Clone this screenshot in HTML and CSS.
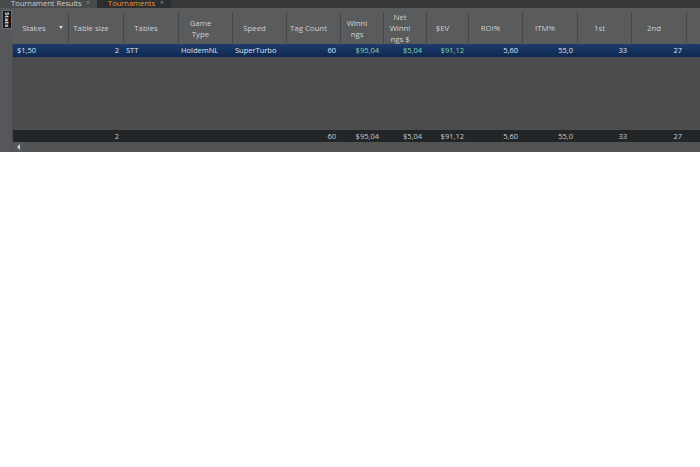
FILE: index.html
```html
<!DOCTYPE html>
<html>
<head>
<meta charset="utf-8">
<link rel="stylesheet" href="styles.css">
</head>
<body>
<div class="app">
  <div class="tabbar">
    <div class="tab active"><span class="tab-label">Tournament Results</span><span class="tab-x">×</span></div>
    <div class="tab other"><span class="tab-label orange">Tournaments</span><span class="tab-x">×</span></div>
  </div>
  <div class="main">
    <div class="side">
      <div class="stats-btn">Stats</div>
    </div>
    <div class="grid-area">
      <div class="row head">
        <div class="hc sort">Stakes<span class="arrow"></span></div>
        <div class="hc">Table size</div>
        <div class="hc">Tables</div>
        <div class="hc">Game<br>Type</div>
        <div class="hc">Speed</div>
        <div class="hc">Tag Count</div>
        <div class="hc">Winni<br>ngs</div>
        <div class="hc">Net<br>Winni<br>ngs $</div>
        <div class="hc">$EV</div>
        <div class="hc">ROI%</div>
        <div class="hc">ITM%</div>
        <div class="hc">1st</div>
        <div class="hc">2nd</div>
        <div class="hc last"></div>
      </div>
      <div class="row data">
        <div class="c l first">$1,50</div>
        <div class="c r">2</div>
        <div class="c l">STT</div>
        <div class="c l">HoldemNL</div>
        <div class="c l">SuperTurbo</div>
        <div class="c r">60</div>
        <div class="c r green">$95,04</div>
        <div class="c r green">$5,04</div>
        <div class="c r green">$91,12</div>
        <div class="c r">5,60</div>
        <div class="c r">55,0</div>
        <div class="c r">33</div>
        <div class="c r">27</div>
        <div class="c"></div>
      </div>
      <div class="filler"></div>
      <div class="row foot">
        <div class="c"></div>
        <div class="c r">2</div>
        <div class="c"></div>
        <div class="c"></div>
        <div class="c"></div>
        <div class="c r">60</div>
        <div class="c r">$95,04</div>
        <div class="c r">$5,04</div>
        <div class="c r">$91,12</div>
        <div class="c r">5,60</div>
        <div class="c r">55,0</div>
        <div class="c r">33</div>
        <div class="c r">27</div>
        <div class="c"></div>
      </div>
      <div class="hscroll">
        <div class="scroll-left"><span class="tri"></span></div>
      </div>
    </div>
  </div>
</div>
</body>
</html>
```

FILE: styles.css
```css
html, body {
  margin: 0;
  padding: 0;
  background: #ffffff;
}
body {
  font-family: "Open Sans", "Noto Sans", sans-serif;
  font-size: 7.5px;
}
.app {
  width: 700px;
  display: flex;
  flex-direction: column;
}
.tabbar {
  height: 8px;
  background: #36383a;
  display: flex;
  overflow: hidden;
}
.tab {
  display: flex;
  align-items: flex-end;
  height: 8px;
  overflow: hidden;
}
.tab.active {
  width: 97px;
  background: #484a4c;
}
.tab.other {
  width: 74px;
  background: #2b2d2f;
}
.tab-label {
  font-size: 7.5px;
  line-height: 9px;
  margin-bottom: 0;
  color: #cfd0d1;
  padding-left: 11px;
  white-space: nowrap;
}
.tab-label.orange {
  color: #e59a2c;
}
.tab-x {
  font-size: 7px;
  line-height: 8px;
  margin-bottom: 1px;
  color: #8a8c8e;
  margin-left: auto;
  margin-right: 7px;
}
.main {
  display: flex;
  height: 144px;
}
.side {
  width: 12px;
  background: #55575a;
  flex: none;
  padding-top: 2px;
  box-sizing: border-box;
}
.stats-btn {
  margin-left: 2px;
  width: 10px;
  height: 19px;
  box-sizing: border-box;
  background: #111213;
  border: 1px solid #6c6e70;
  color: #e8e8e8;
  font-size: 6px;
  font-weight: bold;
  writing-mode: vertical-rl;
  text-align: center;
  line-height: 8px;
}
.grid-area {
  flex: 1;
  display: flex;
  flex-direction: column;
  background: #4a4c4e;
  overflow: hidden;
}
.row {
  display: grid;
  grid-template-columns: 57px 55px 55px 54px 54px 54px 43px 43px 42px 54px 55px 54px 55px 30px;
}
.head {
  height: 36px;
  background: #595b5d;
  padding: 4px 0 2px;
  box-sizing: border-box;
}
.hc {
  border-right: 1px solid #444648;
  color: #d0d1d2;
  display: flex;
  align-items: center;
  justify-content: center;
  text-align: center;
  line-height: 11px;
  font-size: 7.8px;
  padding-right: 10px;
  position: relative;
}
.hc.sort {
  padding-right: 12px;
}
.hc.last {
  border-right: none;
}
.arrow {
  position: absolute;
  right: 5px;
  top: 14px;
  width: 0;
  height: 0;
  border-left: 2.5px solid transparent;
  border-right: 2.5px solid transparent;
  border-top: 3px solid #d8d8d8;
}
.data {
  height: 13px;
  background: linear-gradient(#1d3d6e, #0e2850);
  margin-left: 1px;
}
.data .c {
  color: #dfe6ef;
}
.c {
  line-height: 13px;
  white-space: nowrap;
  overflow: hidden;
}
.c.l {
  text-align: left;
  padding-left: 2px;
}
.c.first {
  padding-left: 4px;
}
.c.r {
  text-align: right;
  padding-right: 5px;
}
.data .green {
  color: #86d7ab;
}
.data, .foot {
  grid-template-columns: 56px 55px 55px 54px 54px 54px 43px 43px 42px 54px 55px 54px 55px 30px;
}
.filler {
  height: 73px;
}
.foot {
  height: 12px;
  background: #222629;
  margin-left: 1px;
}
.foot .c {
  color: #c9cbcd;
  line-height: 12px;
}
.hscroll {
  height: 10px;
  background: #505254;
  display: flex;
}
.scroll-left {
  width: 10px;
  margin-left: 1px;
  background: #55585a;
  display: flex;
  align-items: center;
  justify-content: center;
}
.tri {
  width: 0;
  height: 0;
  border-top: 3px solid transparent;
  border-bottom: 3px solid transparent;
  border-right: 3px solid #d0d0d0;
}
```
